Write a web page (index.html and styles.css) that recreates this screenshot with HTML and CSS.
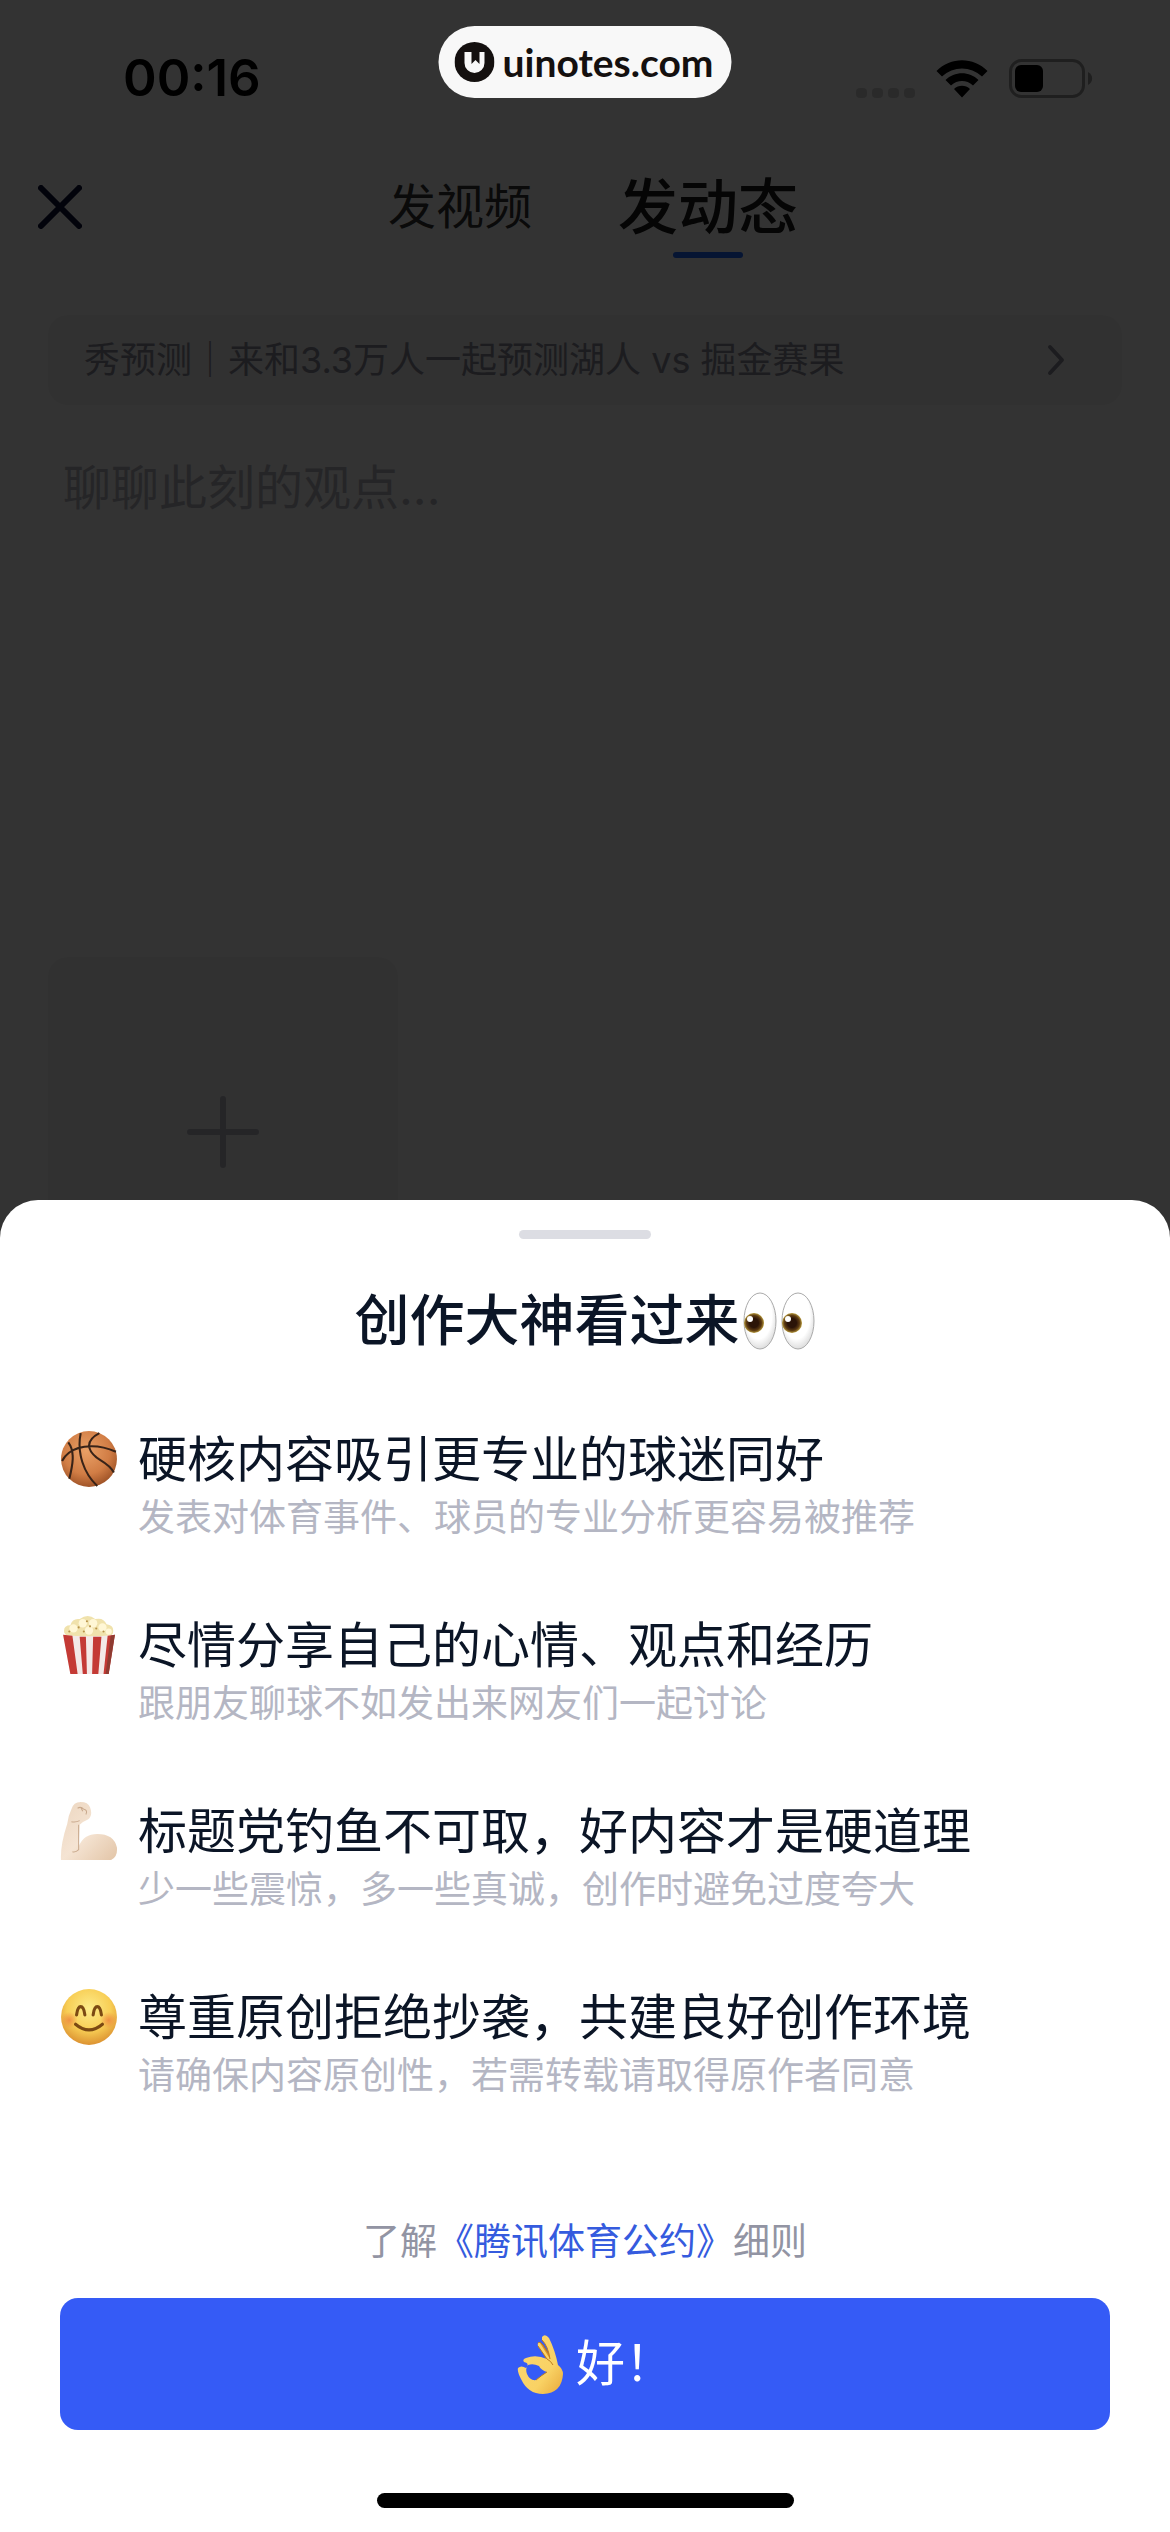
FILE: index.html
```html
<!DOCTYPE html>
<html lang="zh-CN">
<head>
  <meta charset="UTF-8" />
  <title>发动态</title>
  <meta name="viewport" content="width=device-width, initial-scale=1.0" />
  <link rel="stylesheet" href="styles.css">
</head>
<body>

<!-- Compose page -->
<div class="compose">
  <div class="status-bar">
    <span class="time">00:16</span>
    <div class="status-icons">
      <svg class="signal" width="59" height="10" viewBox="0 0 59 10" fill="#d2d2d2">
        <rect width="11" height="10" rx="4" /><rect x="16" width="11" height="10" rx="4" />
        <rect x="32" width="11" height="10" rx="4" /><rect x="48" width="11" height="10" rx="4" />
      </svg>
      <svg class="wifi" width="52" height="38" viewBox="0 0 52 38">
        <path d="M0.5 11C14.5-3.2 37.5-3.2 51.5 11L46 16.5C34.5 5.8 17.5 5.8 6 16.5ZM9.5 20C18.5 11 33.5 11 42.5 20L37 25.5C30.5 19.6 21.5 19.6 15 25.5ZM18 29C22.5 24.8 29.5 24.8 34 29L26 37.5Z" />
      </svg>
      <svg class="battery" width="84" height="39" viewBox="0 0 84 39">
        <rect x="1.5" y="1.5" width="73" height="36" rx="11" fill="none" stroke="#9c9c9c" stroke-width="3" />
        <rect x="6" y="6" width="28" height="27" rx="6" />
        <path d="M79 13C84.5 15.5 84.5 23.5 79 26Z" fill="#9c9c9c" />
      </svg>
    </div>
  </div>

  <nav class="nav">
    <button class="close" aria-label="关闭">
      <svg width="44" height="44" viewBox="0 0 44 44" fill="none" stroke="#0a0f37" stroke-width="6" stroke-linecap="round">
        <path d="M3 3L41 41M41 3L3 41" />
      </svg>
    </button>
    <div class="tabs">
      <button class="tab">发视频</button>
      <button class="tab active">发动态</button>
    </div>
  </nav>

  <button class="predict">
    <span>秀预测｜来和3.3万人一起预测湖人 vs 掘金赛果</span>
    <svg width="18" height="32" viewBox="0 0 18 32" fill="none" stroke="#8c8c9b" stroke-width="4" stroke-linecap="round" stroke-linejoin="round">
      <path d="M3 3L15 16L3 29" />
    </svg>
  </button>

  <textarea class="editor" aria-label="正文" placeholder="聊聊此刻的观点..."></textarea>

  <button class="add" aria-label="添加图片">
    <svg width="72" height="72" viewBox="0 0 72 72" fill="none" stroke="#b9b9c3" stroke-width="6" stroke-linecap="round">
      <path d="M36 3V69M3 36H69" />
    </svg>
  </button>
</div>

<div class="mask"></div>

<div class="site-badge">
  <svg width="40" height="40" viewBox="0 0 40 40">
    <circle cx="20" cy="20" r="20" fill="#14100f" />
    <path d="M10 10H17V22L21 18L25 22V10H30V21A10 10 0 0 1 10 21Z" fill="#f8f8f8" />
  </svg>
  <span>uinotes.com</span>
</div>

<!-- Tips sheet -->
<section class="sheet">
  <div class="handle"></div>
  <h1 class="sheet-title">创作大神看过来
    <svg class="eyes" width="76" height="60" viewBox="0 0 76 60">
      <defs>
        <radialGradient id="white" cx=".45" cy=".4" r=".6">
          <stop offset=".7" stop-color="#fff" /><stop offset="1" stop-color="#dedede" />
        </radialGradient>
        <radialGradient id="iris">
          <stop offset=".45" stop-color="#2b1408" /><stop offset=".75" stop-color="#5c3a12" /><stop offset="1" stop-color="#b79a3c" />
        </radialGradient>
      </defs>
      <g id="eye">
        <ellipse cx="20" cy="31" rx="16" ry="28" fill="url(#white)" stroke="#aaa" />
        <circle cx="14" cy="33" r="10" fill="url(#iris)" />
        <circle cx="10" cy="29" r="3" fill="#fff" />
      </g>
      <use href="#eye" x="38" />
    </svg>
  </h1>

  <ul class="tips">
    <li class="tip">
      <svg class="tip-icon" viewBox="0 0 56 56">
        <defs>
          <radialGradient id="ball" cx=".45" cy=".35" r=".65">
            <stop offset="0" stop-color="#e9a066" /><stop offset=".65" stop-color="#d17d45" /><stop offset="1" stop-color="#a05428" />
          </radialGradient>
        </defs>
        <circle cx="28" cy="28" r="27" fill="url(#ball)" />
        <path d="M2 30C10 14 34 12 54 21M20 3C16 22 23 42 36 54M38 3C21 12 29 23 39 29Q49 35 52 41M8 12C15 21 12 35 9 47" fill="none" stroke="#382318" stroke-width="2" />
      </svg>
      <div>
        <h2>硬核内容吸引更专业的球迷同好</h2>
        <p>发表对体育事件、球员的专业分析更容易被推荐</p>
      </div>
    </li>
    <li class="tip">
      <svg class="tip-icon" viewBox="0 0 56 56">
        <path d="M4 16Q3 9 10 9Q12 2 19 3Q27-3 34 3Q42 1 45 8Q53 9 51 17L47 22H8Z" fill="#f0e2ac" />
        <g fill="#fff7d6">
          <circle cx="13" cy="12" r="4" /><circle cx="22" cy="7" r="4" /><circle cx="32" cy="7" r="4" />
          <circle cx="41" cy="11" r="4" /><circle cx="28" cy="14" r="4" /><circle cx="47" cy="15" r="3" />
        </g>
        <g fill="#b7924a">
          <circle cx="18" cy="11" r="1" /><circle cx="26" cy="5" r="1" /><circle cx="35" cy="12" r="1" />
          <circle cx="23" cy="15" r="1" /><circle cx="42" cy="15" r="1" /><circle cx="9" cy="15" r="1" /><circle cx="29" cy="10" r="1" />
        </g>
        <path d="M3 18Q28 21 53 18L47 56H10Z" fill="#f3e9e7" />
        <path d="M3 18L12 19L17 56H10ZM19 20H25L26 56H22ZM32 20H40L37 56H31ZM46 19L53 18L47 56H42Z" fill="#c43a35" />
        <path d="M49 19L53 18L47 56H44Z" fill="#8e3b31" />
      </svg>
      <div>
        <h2>尽情分享自己的心情、观点和经历</h2>
        <p>跟朋友聊球不如发出来网友们一起讨论</p>
      </div>
    </li>
    <li class="tip">
      <svg class="tip-icon" viewBox="0 0 56 56">
        <defs>
          <linearGradient id="skin" x1="0" y1="0" x2="1" y2="1">
            <stop offset="0" stop-color="#ecd6c0" /><stop offset=".5" stop-color="#f5e4d3" /><stop offset="1" stop-color="#e2c4a6" />
          </linearGradient>
        </defs>
        <path d="M11 7Q13 0 20 0Q27 0 29 5Q32 13 27 17Q22 19 19 22L18 43Q23 31 36 31Q52 31 55 44Q56 56 45 57H1Q0 42 7 21Q8 13 11 7Z" fill="url(#skin)" />
        <path d="M11 19Q15 20 19 18M17 6Q20 4 23 7Q27 8 25 12M20 5L22 9M18 22L18 46Q15 49 12 48" fill="none" stroke="#c9a98d" stroke-width="1" />
      </svg>
      <div>
        <h2>标题党钓鱼不可取，好内容才是硬道理</h2>
        <p>少一些震惊，多一些真诚，创作时避免过度夸大</p>
      </div>
    </li>
    <li class="tip">
      <svg class="tip-icon" viewBox="0 0 56 56">
        <defs>
          <radialGradient id="face" cx=".5" cy=".35" r=".65">
            <stop offset="0" stop-color="#fdec8b" /><stop offset=".6" stop-color="#f8ce55" /><stop offset="1" stop-color="#dc9231" />
          </radialGradient>
          <radialGradient id="blush">
            <stop offset="0" stop-color="#ee8340" stop-opacity=".8" /><stop offset="1" stop-color="#ee8340" stop-opacity="0" />
          </radialGradient>
        </defs>
        <circle cx="28" cy="28" r="27" fill="url(#face)" />
        <circle cx="9" cy="31" r="8" fill="url(#blush)" /><circle cx="47" cy="31" r="8" fill="url(#blush)" />
        <path d="M16 26Q17 18 20 18Q23 18 24 26M32 26Q33 18 36 18Q39 18 40 26M15 35Q28 46 41 35" fill="none" stroke="#7c4a13" stroke-width="3" stroke-linecap="round" />
      </svg>
      <div>
        <h2>尊重原创拒绝抄袭，共建良好创作环境</h2>
        <p>请确保内容原创性，若需转载请取得原作者同意</p>
      </div>
    </li>
  </ul>

  <p class="rules">了解<a href="#">《腾讯体育公约》</a>细则</p>

  <button class="confirm">
    <svg width="72" height="60" viewBox="-14 0 72 60">
      <defs>
        <linearGradient id="hand" x1="0" y1="0" x2="1" y2="1">
          <stop offset="0" stop-color="#fbd671" /><stop offset=".65" stop-color="#f9d264" /><stop offset="1" stop-color="#e8a83a" />
        </linearGradient>
      </defs>
      <path d="M28 9Q30 7 33 11L43 26L38 28Z" fill="#d99328" stroke="#b9741c" />
      <path fill-rule="evenodd" d="M32 3Q35-1 39 4Q45 16 48 31Q53 35 53 40Q52 59 33 60Q18 60 11 45Q7 37 8 34Q11 31 16 34Q20 29 14 28Q12 25 16 24Q26 20 37 25L28 12Q27 8 30 9L40 25Q38 12 32 6ZM18 31Q15 34 17 40Q20 47 26 46Q32 41 37 38Q31 36 29 32Q23 29 18 31Z" fill="url(#hand)" />
      <path d="M40 25Q38 12 32 6M28 12L37 25Q41 27 43 31M37 38Q32 41 26 46" fill="none" stroke="#bc7c20" />
    </svg>
    <span>好！</span>
  </button>
  <div class="home-indicator"></div>
</section>

</body>
</html>
```
FILE: styles.css
```css
* { box-sizing: border-box; }
body {
  margin: 0;
  font-family: Inter, "Noto Sans CJK SC", sans-serif;
  background: #fff;
  color: #0b1526;
}
button {
  padding: 0;
  border: none;
  background: none;
  font-family: inherit;
  cursor: pointer;
}
svg {
  display: block;
  flex-shrink: 0;
}
h1, h2, p, ul {
  margin: 0;
  padding: 0;
}

/* Compose page */
.compose {
  height: 100vh;
  overflow: hidden;
}
.status-bar {
  display: flex;
  justify-content: space-between;
  align-items: center;
  height: 132px;
  padding: 24px 77px 0 123px;
}
.time {
  font-size: 51px;
  font-weight: 600;
  line-height: 60px;
  color: #000;
}
.status-icons {
  display: flex;
  align-items: flex-end;
  gap: 21px;
}
.nav {
  display: flex;
  align-items: center;
  height: 150px;
  padding: 0 66px 0 38px;
}
.tabs {
  display: flex;
  align-items: center;
  gap: 86px;
  margin: 0 auto;
}
.tab {
  position: relative;
  font-size: 48px;
  line-height: 84px;
  color: #333;
}
.tab.active {
  font-size: 60px;
  font-weight: 500;
  color: #191919;
}
.tab.active::after {
  content: "";
  position: absolute;
  left: 50%;
  bottom: -9px;
  width: 70px;
  height: 6px;
  margin-left: -35px;
  border-radius: 3px;
  background: #1e69ff;
}
.predict {
  display: flex;
  justify-content: space-between;
  align-items: center;
  width: calc(100% - 96px);
  height: 90px;
  margin: 33px 48px 0;
  padding: 0 57px 0 36px;
  border-radius: 20px;
  background: #f5f5f5;
  font-size: 36px;
  line-height: 48px;
  color: #8c8c9b;
}
.editor {
  display: block;
  width: calc(100% - 126px);
  height: 452px;
  margin: 50px 63px;
  padding: 0;
  border: none;
  outline: none;
  resize: none;
  background: none;
  font-family: inherit;
  font-size: 48px;
  line-height: 66px;
}
.editor::placeholder {
  color: #b9b9c3;
}
.add {
  display: flex;
  justify-content: center;
  align-items: center;
  width: 350px;
  height: 350px;
  margin-left: 48px;
  border-radius: 20px;
  background: #f5f5f5;
}
.mask {
  position: fixed;
  inset: 0;
  background: rgba(0,0,0,0.8);
}
.site-badge {
  position: fixed;
  top: 26px;
  left: 50%;
  display: flex;
  align-items: center;
  gap: 8px;
  height: 72px;
  padding: 0 18px 0 16px;
  border-radius: 36px;
  background: #f8f8f8;
  transform: translateX(-50%);
  font-family: Lato, sans-serif;
  font-size: 39px;
  font-weight: 700;
  line-height: 48px;
  color: #14100f;
}

/* Tips sheet */
.sheet {
  position: fixed;
  left: 0;
  right: 0;
  bottom: 0;
  padding: 30px 60px 24px;
  border-radius: 38px 38px 0 0;
  background: #fff;
}
.handle {
  width: 132px;
  height: 9px;
  margin: 0 auto 48px;
  border-radius: 5px;
  background: #dcdde3;
}
.sheet-title {
  display: flex;
  justify-content: center;
  align-items: center;
  font-size: 55px;
  font-weight: 500;
  line-height: 66px;
}
.tips {
  display: flex;
  flex-direction: column;
  gap: 74px;
  margin-top: 77px;
  list-style: none;
}
.tip {
  display: flex;
  gap: 20px;
}
.tip-icon {
  width: 58px;
  height: 58px;
}
.tip h2 {
  font-size: 49px;
  font-weight: 400;
  line-height: 60px;
}
.tip p {
  margin-top: 4px;
  font-size: 37px;
  line-height: 48px;
  color: #b4b6c3;
}
.rules {
  margin-top: 118px;
  font-size: 37px;
  line-height: 48px;
  text-align: center;
  color: #9294a3;
}
.rules a {
  color: #355bde;
  text-decoration: none;
}
.confirm {
  display: flex;
  justify-content: center;
  align-items: center;
  gap: 8px;
  width: 100%;
  height: 132px;
  margin-top: 32px;
  border-radius: 18px;
  background: #355bf6;
  font-size: 49px;
  line-height: 58px;
  color: #fff;
}
.home-indicator {
  width: 417px;
  height: 15px;
  margin: 63px auto 0;
  border-radius: 8px;
  background: #000;
}
```
